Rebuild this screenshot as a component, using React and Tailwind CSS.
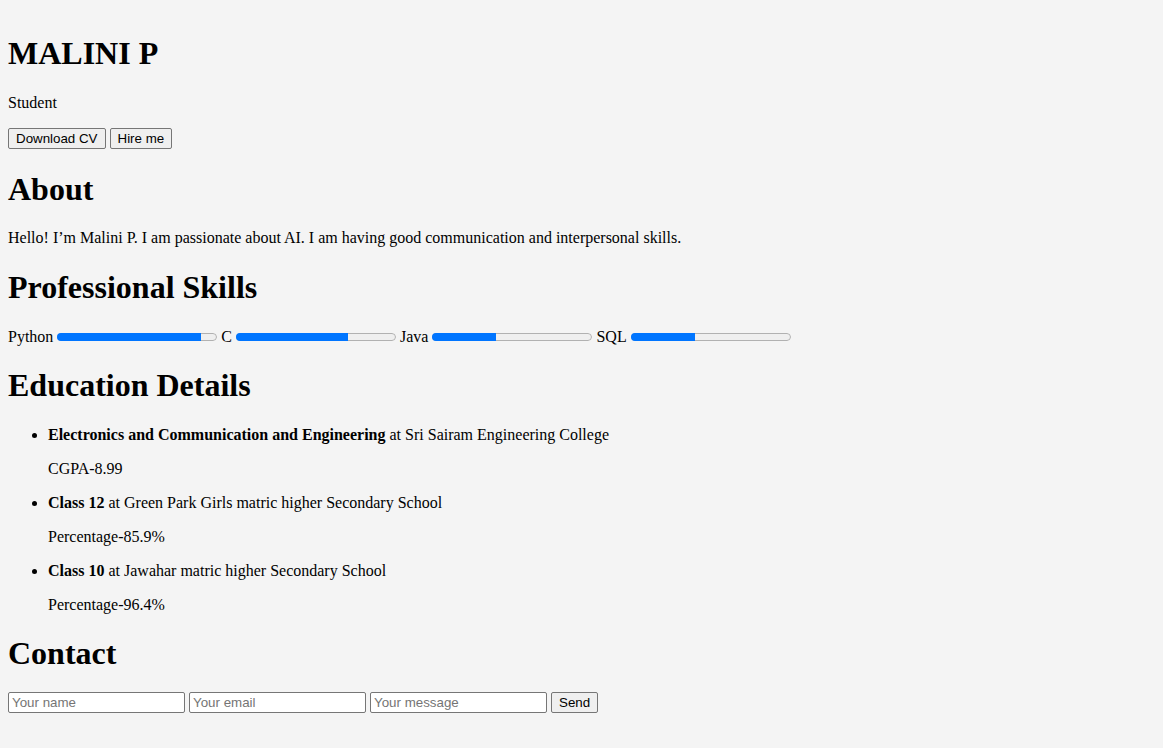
import React from "react";

const skills = [
  { name: "Python", value: 90 },
  { name: "C", value: 70 },
  { name: "Java", value: 40 },
  { name: "SQL", value: 40 },
];

const education = [
  {
    title: "Electronics and Communication and Engineering",
    place: "Sri Sairam Engineering College",
    score: "CGPA-8.99",
  },
  {
    title: "Class 12",
    place: "Green Park Girls matric higher Secondary School",
    score: "Percentage-85.9%",
  },
  {
    title: "Class 10",
    place: "Jawahar matric higher Secondary School",
    score: "Percentage-96.4%",
  },
];

function Bar({ value }) {
  return (
    <div className="relative h-[8px] w-[160px] shrink-0 overflow-hidden rounded-full bg-[#efefef]">
      <div className="absolute inset-0 rounded-full border border-[#b1b1b1]" />
      <div
        className="absolute inset-y-0 left-0 bg-[#0075ff]"
        style={{ width: `${value}%` }}
      />
    </div>
  );
}

function Btn({ children }) {
  return (
    <button className="flex h-[21px] items-center rounded-[2px] border border-[#767676] bg-[#efefef] px-[7px] font-['Liberation_Sans',Arial,sans-serif] text-[13.33px] leading-none text-black">
      {children}
    </button>
  );
}

function Field({ placeholder }) {
  return (
    <input
      type="text"
      placeholder={placeholder}
      className="h-[21px] w-[177px] rounded-[2px] border border-[#767676] bg-white px-[3px] font-['Liberation_Sans',Arial,sans-serif] text-[13.33px] text-black placeholder:text-[#757575]"
    />
  );
}

export default function App() {
  return (
    <div className="min-h-screen bg-[#f4f4f4] px-2 pt-[35px] pb-4 font-['Liberation_Serif','Times_New_Roman',serif] text-[16px] text-black">
      <h1 className="text-[32px] font-bold leading-[37px]">MALINI P</h1>
      <p className="mt-[22px] leading-[18px]">Student</p>
      <div className="mt-[16px] flex gap-[4px]">
        <Btn>Download CV</Btn>
        <Btn>Hire me</Btn>
      </div>

      <h2 className="mt-[22px] text-[32px] font-bold leading-[37px]">About</h2>
      <p className="mt-[21px] leading-[18px]">
        Hello! I’m Malini P. I am passionate about AI. I am having good
        communication and interpersonal skills.
      </p>

      <h2 className="mt-[22px] text-[32px] font-bold leading-[37px]">
        Professional Skills
      </h2>
      <div className="mt-[22px] flex h-[18px] items-center gap-[4px] leading-[18px]">
        {skills.map((s) => (
          <React.Fragment key={s.name}>
            <span>{s.name}</span>
            <Bar value={s.value} />
          </React.Fragment>
        ))}
      </div>

      <h2 className="mt-[21px] text-[32px] font-bold leading-[37px]">
        Education Details
      </h2>
      <ul className="mt-[22px] list-disc pl-10">
        {education.map((e, i) => (
          <li key={i} className={i > 0 ? "mt-[16px] leading-[18px]" : "leading-[18px]"}>
            <strong className="font-bold">{e.title}</strong> at {e.place}
            <p className="mt-[16px] leading-[18px]">{e.score}</p>
          </li>
        ))}
      </ul>

      <h2 className="mt-[21px] text-[32px] font-bold leading-[37px]">Contact</h2>
      <form className="mt-[20px] flex gap-[4px]" onSubmit={(ev) => ev.preventDefault()}>
        <Field placeholder="Your name" />
        <Field placeholder="Your email" />
        <Field placeholder="Your message" />
        <Btn>Send</Btn>
      </form>
    </div>
  );
}
